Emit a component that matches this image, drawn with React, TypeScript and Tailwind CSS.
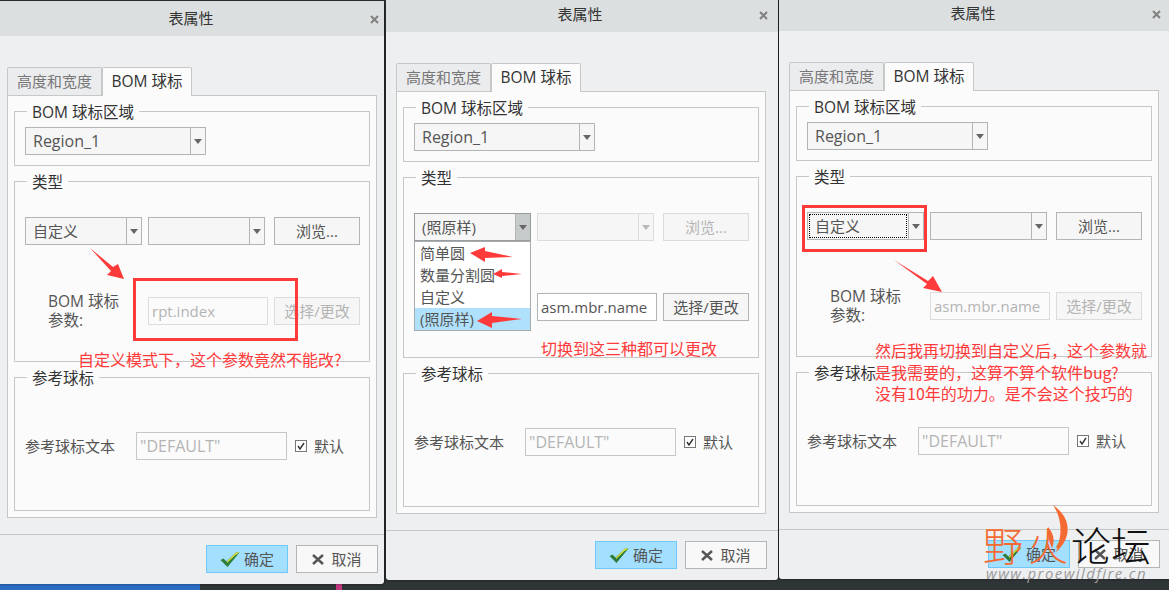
import type { ReactNode } from "react"

const font = "font-['Open_Sans','Noto_Sans_CJK_SC',sans-serif]"

const Arrow = ({ points }: { points: string }) => (
  <polygon points={points} fill="#ff3a3a" />
)

const Caret = ({ light }: { light?: boolean }) => (
  <svg width="8" height="5" viewBox="0 0 8 5">
    <path d="M0 0h8L4 5z" fill={light ? "#b8b8b8" : "#666"} />
  </svg>
)

const Combo = ({
  w,
  text,
  big,
  disabled,
  open,
  focused,
}: {
  w: string
  text?: string
  big?: boolean
  disabled?: boolean
  open?: boolean
  focused?: boolean
}) => (
  <div
    className={`flex h-[28px] ${w} shrink-0 border bg-[#f6f6f6] leading-none ${big ? "text-[16px]" : "text-[15px]"} ${
      disabled ? "border-[#dcdcdc]" : open ? "border-[#9a9d9d]" : "border-[#b3b5b5]"
    }`}
  >
    <div className="flex flex-1 p-[1px]">
      <div
        className={`flex flex-1 items-center px-[5px] text-[#555] ${
          focused ? "border border-dotted border-black" : "border border-transparent"
        }`}
      >
        {text}
      </div>
    </div>
    <div
      className={`flex w-[15px] items-center justify-center border-l ${
        disabled ? "border-[#dcdcdc]" : "border-[#b3b5b5]"
      } ${open ? "bg-[#c8cbcb]" : ""}`}
    >
      <Caret light={disabled} />
    </div>
  </div>
)

const Btn = ({ children, disabled }: { children: ReactNode; disabled?: boolean }) => (
  <div
    className={`flex h-[28px] w-[86px] items-center justify-center border bg-[#f6f6f6] text-[15px] ${
      disabled ? "border-[#dcdcdc] text-[#b4b4b4]" : "border-[#b3b5b5] text-[#555]"
    }`}
  >
    {children}
  </div>
)

const Group = ({ title, className, children }: { title: string; className: string; children: ReactNode }) => (
  <div className={`relative border border-[#c6c8c8] ${className}`}>
    <span className="absolute left-[12px] top-[-10px] bg-[#fbfbfb] px-[5px] text-[15.5px] leading-[20px] text-[#333]">
      {title}
    </span>
    {children}
  </div>
)

const Dialog = ({
  left,
  top,
  width,
  first,
  second,
  browseDisabled,
  param,
  paramEnabled,
  selectEnabled,
  hideLabel,
  open,
  focused,
  secondDisabled,
}: {
  left: string
  top: string
  width: string
  first: string
  second?: string
  browseDisabled?: boolean
  param: string
  paramEnabled?: boolean
  selectEnabled?: boolean
  hideLabel?: boolean
  open?: boolean
  focused?: boolean
  secondDisabled?: boolean
}) => (
  <section className={`absolute ${left} ${top} ${width} h-[583px] rounded-b-[3px] bg-[#eeeff1] shadow-[1px_0_3px_rgba(0,0,0,0.45)]`}>
    <header className="h-[35px] bg-[#dcdfdf]">
      <div className="relative flex h-full w-[387px] items-center justify-center pl-[1px] text-[15px] text-[#333]">
        表属性
        <svg className="absolute left-[373px] top-[14px]" width="9" height="9" viewBox="0 0 9 9">
          <path d="M1 1l7 7M8 1L1 8" stroke="#808080" strokeWidth="2" />
        </svg>
      </div>
    </header>

    <div className="ml-[10px] mt-[31px] w-[370px]">
      <div className="flex h-[28px] items-end">
        <div className="flex h-[28px] w-[95px] items-center justify-center rounded-t-[2px] border border-b-0 border-[#c6c8c8] bg-[#ebecee] text-[15px] text-[#777]">
          高度和宽度
        </div>
        <div className="relative z-10 mb-[-1px] flex h-[29px] w-[90px] items-center justify-center rounded-t-[2px] border border-b-0 border-[#c6c8c8] bg-[#fbfbfb] text-[15.5px] text-[#333]">
          BOM 球标
        </div>
      </div>

      <div className="flex h-[423px] flex-col gap-[15px] border border-[#c6c8c8] bg-[#fbfbfb] px-[6px] pt-[15px]">
        <Group title="BOM 球标区域" className="h-[55px] pl-[10px] pt-[15px]">
          <Combo w="w-[181px]" text="Region_1" big />
        </Group>

        <Group title="类型" className="h-[181px] pl-[10px] pt-[35px]">
          <div className="relative flex">
            <Combo w="w-[117px]" text={first} open={open} focused={focused} />
            <div className="ml-[6px]">
              <Combo w="w-[117px]" text={second} disabled={secondDisabled} />
            </div>
            <div className="ml-[9px]">
              <Btn disabled={browseDisabled}>浏览...</Btn>
            </div>
            {open && (
              <ul className="absolute left-0 top-[28px] z-20 w-[117px] border border-[#a9acac] bg-white text-[15px] leading-[22px] text-[#555]">
                <li className="pl-[5px]">简单圆</li>
                <li className="pl-[5px]">数量分割圆</li>
                <li className="pl-[5px]">自定义</li>
                <li className="bg-[#b0e1fc] pl-[5px]">(照原样)</li>
              </ul>
            )}
          </div>
          <div className="mt-[52px] flex">
            <div className={`ml-[23px] mt-[-5px] w-[100px] text-[15.5px] leading-[19px] text-[#555] ${hideLabel ? "invisible" : ""}`}>
              BOM 球标
              <br />
              参数:
            </div>
            <div
              className={`flex h-[28px] w-[120px] items-center border px-[3px] text-[15px] ${
                paramEnabled ? "border-[#b3b5b5] bg-white text-[#555]" : "border-[#dcdcdc] text-[#b4b4b4]"
              } ${param === "rpt.index" ? "text-[15.5px]" : ""}`}
            >
              {param}
            </div>
            <div className="ml-[6px]">
              <Btn disabled={!selectEnabled}>选择/更改</Btn>
            </div>
          </div>
        </Group>

        <Group title="参考球标" className="h-[134px] pl-[10px] pt-[54px]">
          <div className="flex items-center text-[15px]">
            <span className="w-[111px] text-[#555]">参考球标文本</span>
            <div className="flex h-[28px] w-[151px] items-center border border-[#c6c8c8] px-[3px] text-[16px] text-[#b4b4b4]">
              "DEFAULT"
            </div>
            <div className="ml-[8px] flex h-[12px] w-[12px] items-center justify-center border border-[#777] bg-white">
              <svg width="10" height="10" viewBox="0 0 10 10">
                <path d="M2 5l2 3 4-6" fill="none" stroke="#333" strokeWidth="1.4" />
              </svg>
            </div>
            <span className="ml-[7px] text-[#555]">默认</span>
          </div>
        </Group>
      </div>
    </div>

    <footer className="mt-[16px] flex gap-[8px] border-t border-[#c6c8c8] pl-[209px] pt-[10px]">
      <div className="flex h-[28px] w-[82px] items-center justify-center gap-[4px] border border-[#6fc8fb] bg-[#a3dfff] text-[15px] text-[#555]">
        <svg width="20" height="15" viewBox="0 0 20 15">
          <path d="M0.5 8l3-1.5 3 3L16 0.5l3.5 0-12 14.5z" fill="#2f7d3a" />
          <path d="M7 9.5L16 0.5h3.5L16.5 2.5H16L7 11z" fill="#e8e53a" />
        </svg>
        确定
      </div>
      <div className="flex h-[28px] w-[82px] items-center justify-center gap-[7px] border border-[#b5b5b5] bg-[#f8f8f8] text-[15px] text-[#555]">
        <svg width="12" height="11" viewBox="0 0 12 11">
          <path d="M1 1l10 9M11 1L1 10" stroke="#555" strokeWidth="2.4" />
        </svg>
        取消
      </div>
    </footer>
  </section>
)

const note = "absolute z-30 text-[16px] leading-[21.5px] text-[#ff3a3a] font-['Noto_Sans_CJK_SC',sans-serif]"

export default function App() {
  return (
    <div className={`relative h-[590px] w-[1169px] overflow-hidden bg-[#2f3436] ${font}`}>
      {/* desktop peeking out under the first window */}
      <div className="absolute bottom-0 left-0 h-[6px] w-[200px] bg-[#2a6cc0]" />
      <div className="absolute bottom-0 left-[336px] h-[6px] w-[6px] bg-[#c2387f]" />

      <Dialog left="left-[-3px]" top="top-[1px]" width="w-[387px]" first="自定义" browseDisabled={false} param="rpt.index" />
      <Dialog
        left="left-[386px]"
        top="top-[-3px]"
        width="w-[392px]"
        first="(照原样)"
        open
        secondDisabled
        browseDisabled
        param="asm.mbr.name"
        paramEnabled
        selectEnabled
        hideLabel
      />
      <Dialog left="left-[779px]" top="top-[-4px]" width="w-[392px]" first="自定义" focused param="asm.mbr.name" />

      {/* annotations */}
      <div className="absolute left-[133px] top-[278px] z-30 h-[63px] w-[165px] border-[3px] border-[#ff3a3a]" />
      <div className="absolute left-[802px] top-[205px] z-30 h-[47px] w-[125px] border-[3px] border-[#ff3a3a]" />
      <svg className="absolute left-0 top-0 z-30" width="1169" height="590" viewBox="0 0 1169 590">
        <Arrow points="90,248 113,267 118,264 124,279 107,275 111,271" />
        <Arrow points="894,260 928,281 933,276 942,292 923,288 927,284" />
        <Arrow points="470,253 485,247 485,251 513,257 485,258 485,262" />
        <Arrow points="493,274 502,269 502,272 522,274 502,276 502,278" />
        <Arrow points="477,321 492,312 492,316 522,319 492,323 492,328" />
        <path d="M1053 505C1072 518 1072 538 1056 552C1062 536 1063 520 1053 505Z" fill="#f56a32" />
        <path d="M1048 527C1054 534 1055 541 1052 548C1049 541 1047 535 1048 527Z" fill="#f56a32" />
      </svg>
      <p className={`${note} left-[78px] top-[349px] whitespace-nowrap`}>自定义模式下，这个参数竟然不能改?</p>
      <p className={`${note} left-[541px] top-[338px] whitespace-nowrap`}>切换到这三种都可以更改</p>
      <p className={`${note} left-[875px] top-[340px] w-[280px]`}>
        然后我再切换到自定义后，这个参数就
        <br />
        是我需要的，这算不算个软件bug?
        <br />
        没有10年的功力。是不会这个技巧的
      </p>

      {/* forum watermark */}
      <div className="absolute left-[983px] top-[522px] z-40 flex font-['Noto_Sans_CJK_SC',sans-serif] text-[40px] font-light leading-[44px]">
        <span className="text-[#f56a32]">野</span>
        <span className="ml-[5px] text-[#f56a32]">火</span>
        <span className="ml-[3px] text-[#111]">论坛</span>
      </div>
      <div className="absolute left-[986px] top-[564px] z-40 text-[15px] italic leading-[18px] tracking-[1.4px] text-[#9a9a9a]">
        www.proewildfire.cn
      </div>
    </div>
  )
}
